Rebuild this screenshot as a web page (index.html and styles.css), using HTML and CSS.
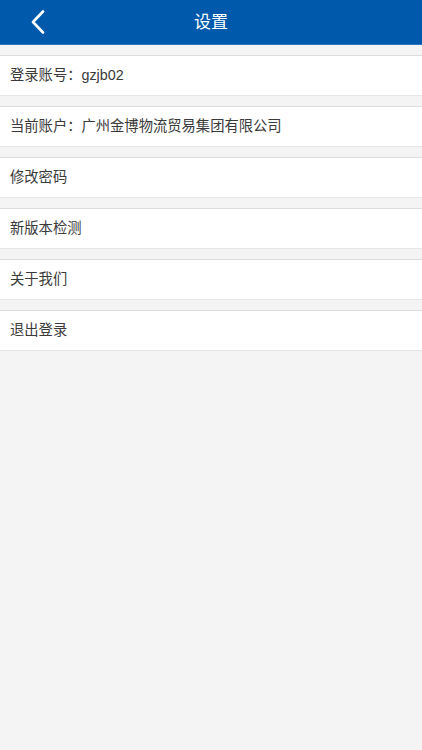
FILE: index.html
```html
<!DOCTYPE html>
<html lang="zh">
<head>
<meta charset="utf-8">
<title>设置</title>
<link rel="stylesheet" href="styles.css">
</head>
<body>
<header class="nav">
  <span class="back">
    <svg width="16" height="24" viewBox="0 0 16 24"><path d="M13 1.5 L3 12 L13 22.5" fill="none" stroke="#fff" stroke-width="2.6" stroke-linecap="round" stroke-linejoin="round"/></svg>
  </span>
  <h1 class="title">设置</h1>
</header>
<main class="list">
  <div class="row">登录账号：gzjb02</div>
  <div class="row">当前账户：广州金博物流贸易集团有限公司</div>
  <div class="row">修改密码</div>
  <div class="row">新版本检测</div>
  <div class="row">关于我们</div>
  <div class="row">退出登录</div>
</main>
</body>
</html>
```
FILE: styles.css
```css
html, body {
  margin: 0;
  padding: 0;
  background: #f4f4f4;
  font-family: "Liberation Sans", "Noto Sans CJK SC", sans-serif;
}
.nav {
  height: 44px;
  background: #0059ab;
  border-bottom: 1px solid #2f75bd;
  display: flex;
  align-items: center;
  justify-content: center;
  position: relative;
}
.back {
  position: absolute;
  left: 30px;
  top: 10px;
  display: flex;
}
.title {
  margin: 0;
  color: #fff;
  font-size: 17px;
  font-weight: normal;
  line-height: 1;
}
.list {
  display: flex;
  flex-direction: column;
}
.row {
  margin-top: 10px;
  height: 39px;
  background: #fff;
  border-top: 1px solid #dcdcdc;
  border-bottom: 1px solid #e6e6e6;
  display: flex;
  align-items: center;
  padding-left: 10px;
  font-size: 14.3px;
  line-height: 1;
  color: #3a3a3a;
}
```
